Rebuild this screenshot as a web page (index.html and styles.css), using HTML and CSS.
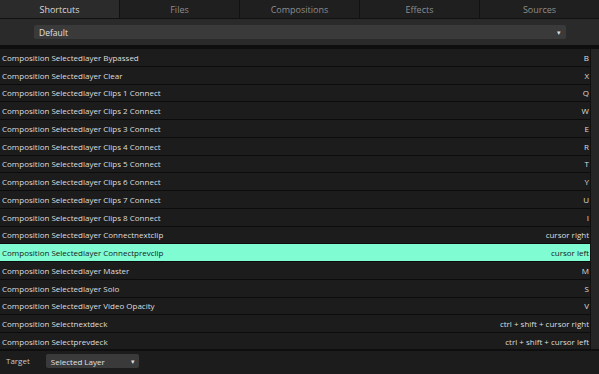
FILE: index.html
```html
<!DOCTYPE html>
<html>
<head>
<meta charset="utf-8">
<link rel="stylesheet" href="styles.css">
</head>
<body>
<div class="app">
  <div class="tabs">
    <div class="tab active">Shortcuts</div>
    <div class="tab">Files</div>
    <div class="tab">Compositions</div>
    <div class="tab">Effects</div>
    <div class="tab">Sources</div>
  </div>
  <div class="preset-bar">
    <div class="select wide"><span>Default</span><span class="arrow">&#9662;</span></div>
  </div>
  <div class="list-wrap">
    <div class="list">
      <div class="row"><span>Composition Selectedlayer Bypassed</span><span>B</span></div>
      <div class="row"><span>Composition Selectedlayer Clear</span><span>X</span></div>
      <div class="row"><span>Composition Selectedlayer Clips 1 Connect</span><span>Q</span></div>
      <div class="row"><span>Composition Selectedlayer Clips 2 Connect</span><span>W</span></div>
      <div class="row"><span>Composition Selectedlayer Clips 3 Connect</span><span>E</span></div>
      <div class="row"><span>Composition Selectedlayer Clips 4 Connect</span><span>R</span></div>
      <div class="row"><span>Composition Selectedlayer Clips 5 Connect</span><span>T</span></div>
      <div class="row"><span>Composition Selectedlayer Clips 6 Connect</span><span>Y</span></div>
      <div class="row"><span>Composition Selectedlayer Clips 7 Connect</span><span>U</span></div>
      <div class="row"><span>Composition Selectedlayer Clips 8 Connect</span><span>I</span></div>
      <div class="row"><span>Composition Selectedlayer Connectnextclip</span><span>cursor right</span></div>
      <div class="row selected"><span>Composition Selectedlayer Connectprevclip</span><span>cursor left</span></div>
      <div class="row"><span>Composition Selectedlayer Master</span><span>M</span></div>
      <div class="row"><span>Composition Selectedlayer Solo</span><span>S</span></div>
      <div class="row"><span>Composition Selectedlayer Video Opacity</span><span>V</span></div>
      <div class="row"><span>Composition Selectnextdeck</span><span>ctrl + shift + cursor right</span></div>
      <div class="row"><span>Composition Selectprevdeck</span><span>ctrl + shift + cursor left</span></div>
    </div>
    <div class="scrollbar"></div>
  </div>
  <div class="footer">
    <span class="label">Target</span>
    <div class="select small"><span>Selected Layer</span><span class="arrow">&#9662;</span></div>
  </div>
</div>
</body>
</html>
```

FILE: styles.css
```css
* { box-sizing: border-box; }
html, body {
  margin: 0;
  padding: 0;
  background: #0e0e0e;
}
body {
  font-family: "Open Sans", "Noto Sans", sans-serif;
  font-size: 8px;
  color: #dedede;
}
.app {
  width: 599px;
  height: 374px;
  display: flex;
  flex-direction: column;
  overflow: hidden;
}
.tabs {
  display: flex;
  height: 19px;
  flex: none;
  gap: 1px;
  background: #111;
  border-bottom: 1px solid #111;
}
.tab {
  flex: 1;
  background: #1f1f1f;
  color: #8e8e8e;
  display: flex;
  align-items: center;
  justify-content: center;
  font-size: 9px;
}
.tab.active {
  background: #2b2b2b;
  color: #d8d8d8;
}
.preset-bar {
  height: 26px;
  flex: none;
  background: #2a2a2a;
  padding: 6px 33px 0 34px;
}
.select {
  background: #3a3a3a;
  border-radius: 2px;
  display: flex;
  align-items: center;
  justify-content: space-between;
  color: #e0e0e0;
}
.select.wide {
  height: 14px;
  padding: 0 5px 0 5px;
  font-size: 8.5px;
}
.arrow {
  font-size: 7px;
  color: #ddd;
}
.list-wrap {
  margin-top: 4px;
  height: 300px;
  flex: none;
  display: flex;
  overflow: hidden;
}
.list {
  flex: 1;
  display: flex;
  flex-direction: column;
}
.row {
  height: 17.75px;
  flex: none;
  display: flex;
  align-items: center;
  justify-content: space-between;
  padding: 0 1px 0 2px;
  background: #1c1c1c;
  border-bottom: 1px solid #0c0c0c;
  white-space: nowrap;
}
.row.selected {
  background: #7ffcd2;
  color: #1a1a1a;
}
.scrollbar {
  width: 9px;
  flex: none;
  background: #262626;
  border-left: 1px solid #101010;
}
.footer {
  flex: 1;
  background: #1c1c1c;
  margin-top: 2px;
  display: flex;
  align-items: flex-start;
  padding: 3px 0 0 6px;
  gap: 16px;
}
.label {
  color: #c8c8c8;
  line-height: 14px;
}
.select.small {
  width: 93px;
  height: 14px;
  padding: 0 4px 0 5px;
}
```
